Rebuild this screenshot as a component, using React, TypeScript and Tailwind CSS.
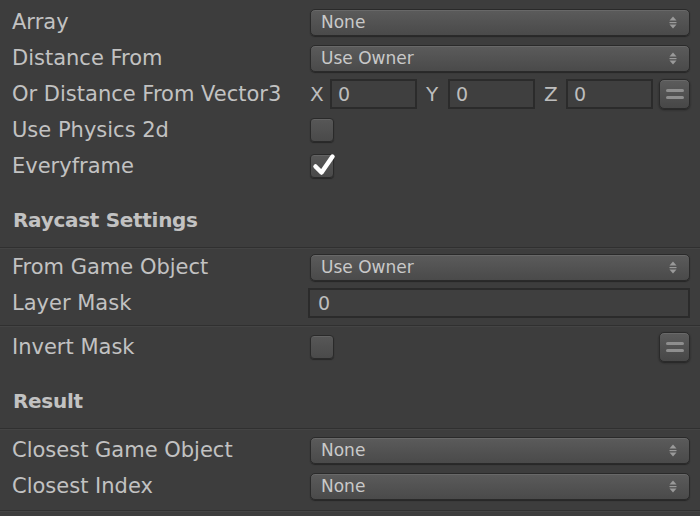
import React from "react";

const font = { fontFamily: '"DejaVu Sans", "Liberation Sans", sans-serif' };

function Arrows() {
  return (
    <svg width="8" height="13" viewBox="0 0 8 13" className="shrink-0">
      <path d="M4 0.5 L7.5 4.5 L0.5 4.5 Z" fill="#9a9a9a" />
      <rect x="0.5" y="6" width="7" height="1.2" fill="#9a9a9a" />
      <path d="M0.5 8.5 L7.5 8.5 L4 12.5 Z" fill="#9a9a9a" />
    </svg>
  );
}

function Dropdown({ value }: { value: string }) {
  return (
    <div className="flex-1 h-[27px] rounded-[5px] border border-[#2a2a2a] bg-gradient-to-b from-[#5b5b5b] to-[#4a4a4a] shadow-[inset_0_1px_0_#686868,0_1px_1px_#262626] flex items-center pl-[10px] pr-[12px] justify-between">
      <span className="text-[17px] text-[#c9c9c9] leading-none">{value}</span>
      <Arrows />
    </div>
  );
}

function Field({ value, className }: { value: string; className?: string }) {
  return (
    <div
      className={
        "h-[30px] border-2 border-[#2b2b2b] bg-[#3f3f3f] flex items-center pl-[6px] " +
        (className ?? "")
      }
    >
      <span className="text-[19px] text-[#bdbdbd] leading-none">{value}</span>
    </div>
  );
}

function Checkbox({ checked }: { checked?: boolean }) {
  return (
    <div className="relative w-[24px] h-[24px] rounded-[4px] border border-[#2a2a2a] bg-gradient-to-b from-[#575757] to-[#4a4a4a] shadow-[inset_0_1px_0_#636363,0_1px_1px_#262626]">
      {checked && (
        <svg
          width="24"
          height="24"
          viewBox="0 0 24 24"
          className="absolute left-[1px] top-[-2px]"
        >
          <path
            d="M3.5 13.5 L9.5 19.5 L20.5 3.5"
            fill="none"
            stroke="#ffffff"
            strokeWidth="4.5"
            strokeLinecap="round"
            strokeLinejoin="round"
          />
        </svg>
      )}
    </div>
  );
}

function EqButton() {
  return (
    <div className="w-[31px] h-[30px] rounded-[5px] border border-[#2a2a2a] bg-gradient-to-b from-[#5c5c5c] to-[#474747] shadow-[inset_0_1px_0_#696969,0_1px_2px_#222] flex flex-col items-center justify-center gap-[4px]">
      <div className="w-[18px] h-[3px] rounded-full bg-[#8e8e8e]" />
      <div className="w-[18px] h-[3px] rounded-full bg-[#8e8e8e]" />
    </div>
  );
}

function Row({ label, children }: { label: string; children?: React.ReactNode }) {
  return (
    <div className="h-9 flex items-center">
      <div className="w-[310px] pl-[12px] text-[21px] text-[#c2c2c2] leading-none whitespace-nowrap">
        {label}
      </div>
      <div className="flex-1 pr-[10px] flex items-center">{children}</div>
    </div>
  );
}

function Header({ title }: { title: string }) {
  return (
    <div className="h-[63px] pt-[8px] flex items-center pl-[13px]">
      <span className="text-[20px] font-bold text-[#c2c2c2] leading-none tracking-[-0.3px]">
        {title}
      </span>
    </div>
  );
}

function Sep() {
  return (
    <div>
      <div className="h-px bg-[#303030]" />
      <div className="h-px bg-[#444444]" />
    </div>
  );
}

export default function App() {
  return (
    <div className="w-[700px] h-[516px] bg-[#3d3d3d] overflow-hidden" style={font}>
      <div className="pt-[4px]">
        <Row label="Array">
          <Dropdown value="None" />
        </Row>
        <Row label="Distance From">
          <Dropdown value="Use Owner" />
        </Row>
        <Row label="Or Distance From Vector3">
          <div className="flex-1 flex items-center">
            <span className="w-[22px] pl-[2px] text-[20px] text-[#bdbdbd] leading-none">X</span>
            <Field value="0" className="w-[87px]" />
            <span className="w-[31px] pl-[9px] text-[20px] text-[#bdbdbd] leading-none">Y</span>
            <Field value="0" className="w-[87px]" />
            <span className="w-[31px] pl-[9px] text-[20px] text-[#bdbdbd] leading-none">Z</span>
            <Field value="0" className="w-[87px]" />
            <div className="ml-[6px]">
              <EqButton />
            </div>
          </div>
        </Row>
        <Row label="Use Physics 2d">
          <Checkbox />
        </Row>
        <Row label="Everyframe">
          <Checkbox checked />
        </Row>
      </div>
      <Header title="Raycast Settings" />
      <Sep />
      <Row label="From Game Object">
        <Dropdown value="Use Owner" />
      </Row>
      <Row label="Layer Mask">
        <Field value="0" className="flex-1 -ml-[2px] pl-[8px]" />
      </Row>
      <div className="h-[4px]" />
      <Sep />
      <div className="h-[2px]" />
      <Row label="Invert Mask">
        <div className="flex-1 flex items-center justify-between">
          <Checkbox />
          <EqButton />
        </div>
      </Row>
      <Header title="Result" />
      <Sep />
      <div className="h-[2px]" />
      <Row label="Closest Game Object">
        <Dropdown value="None" />
      </Row>
      <Row label="Closest Index">
        <Dropdown value="None" />
      </Row>
      <div className="h-[6px]" />
      <Sep />
    </div>
  );
}
